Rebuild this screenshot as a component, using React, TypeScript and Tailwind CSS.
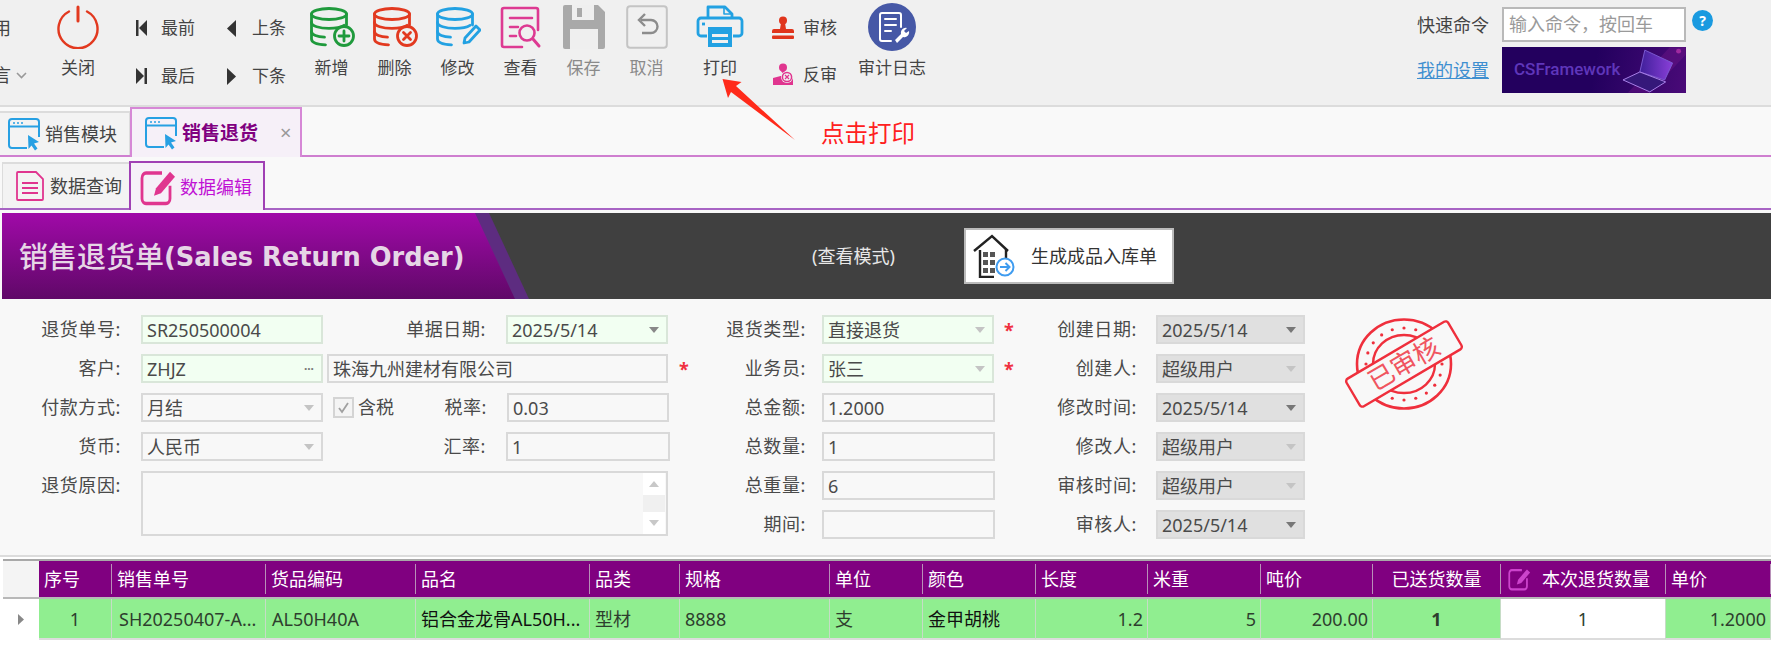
import type { ReactNode } from 'react';

const uiFont = "[font-family:'Noto_Sans','Noto_Sans_CJK_SC',sans-serif]";

function PowerIcon() {
  return (
    <svg width="44" height="44" viewBox="0 0 44 44" fill="none" stroke="#e2391f" strokeLinecap="round">
      <path d="M13 6.5a19.5 19.5 0 1 0 18 0" strokeWidth="2.4" />
      <path d="M22 2v14" strokeWidth="3" />
    </svg>
  );
}

function DbBase({ color, children }: { color: string; children: ReactNode }) {
  return (
    <svg width="46" height="40" viewBox="0 0 46 40" fill="none" stroke={color} strokeWidth="2.8" strokeLinecap="round" strokeLinejoin="round">
      <ellipse cx="20" cy="7" rx="17.5" ry="5.5" />
      <path d="M2.5 7v25c0 3.5 6 5.5 14 5.8" />
      <path d="M37.5 7v11" />
      <path d="M2.5 15.5c0 3.5 8 5.8 17.5 5.8 6 0 12-1 15-3" />
      <path d="M2.5 24.5c0 3.3 6 5.4 13 5.7" />
      {children}
    </svg>
  );
}

function QueryIcon() {
  return (
    <svg width="42" height="44" viewBox="0 0 42 44" fill="none" stroke="#dd3a92" strokeWidth="2.6" strokeLinecap="round">
      <path d="M38 25V5a2 2 0 0 0-2-2H4a2 2 0 0 0-2 2v35a2 2 0 0 0 2 2h18" />
      <path d="M10 13h22M10 22h8M10 31h6" />
      <circle cx="27" cy="28" r="7.5" />
      <path d="M33 34l6 7" strokeWidth="3" />
    </svg>
  );
}

function SaveIcon() {
  return (
    <svg width="44" height="46" viewBox="0 0 44 46">
      <path d="M1 3a2 2 0 0 1 2-2h33l7 7v35a2 2 0 0 1-2 2H3a2 2 0 0 1-2-2z" fill="#a9a9a9" />
      <rect x="10" y="1" width="22" height="15" fill="#efefef" />
      <rect x="15" y="4" width="5" height="9" fill="#a9a9a9" />
      <rect x="8" y="25" width="28" height="20" fill="#efefef" />
    </svg>
  );
}

function CancelIcon() {
  return (
    <svg width="42" height="44" viewBox="0 0 42 44" fill="none">
      <rect x="1.2" y="1.2" width="39.6" height="41.6" rx="3" stroke="#c4c4c4" strokeWidth="2" />
      <path d="M15 15h10a6.5 6.5 0 0 1 0 13h-9" stroke="#8c8c8c" strokeWidth="2.4" />
      <path d="M19 9l-6 6 6 6" stroke="#8c8c8c" strokeWidth="2.4" />
    </svg>
  );
}

function PrintIcon() {
  return (
    <svg width="48" height="44" viewBox="0 0 48 44" fill="none" stroke="#22a1e2" strokeWidth="2.8" strokeLinejoin="round">
      <path d="M12 13V2h17l7 7v4" />
      <path d="M28 2v7h8" strokeWidth="1.6" />
      <path d="M11 31H5a3 3 0 0 1-3-3V16a3 3 0 0 1 3-3h38a3 3 0 0 1 3 3v12a3 3 0 0 1-3 3h-6" />
      <path d="M6 19h3" />
      <rect x="12" y="22" width="24" height="20" fill="#22a1e2" stroke="none" />
      <rect x="16" y="29" width="16" height="3" fill="#f0f0f0" stroke="none" />
      <rect x="16" y="35" width="16" height="3" fill="#f0f0f0" stroke="none" />
    </svg>
  );
}

function LogIcon() {
  return (
    <svg width="48" height="48" viewBox="0 0 48 48" fill="none" stroke="#fff" strokeLinecap="round">
      <circle cx="24" cy="24" r="24" fill="#4658a6" stroke="none" />
      <path d="M33 24V12a2 2 0 0 0-2-2H14a2 2 0 0 0-2 2v24a2 2 0 0 0 2 2h9" strokeWidth="2" />
      <path d="M17 16h11M17 22h11M17 28h6" strokeWidth="2" />
      <path d="M27 37l6-6a5 5 0 0 1 6-6l-3 3 2 2 3-2a5 5 0 0 1-6 6l-6 6z" fill="#fff" stroke="none" />
    </svg>
  );
}

function StampSmall() {
  return (
    <svg width="24" height="24" viewBox="0 0 24 24" fill="#e0351c">
      <circle cx="12" cy="4.5" r="4" />
      <path d="M10 7h4l1 6h6a2 2 0 0 1 2 2v2H1v-2a2 2 0 0 1 2-2h6z" />
      <rect x="1" y="19.5" width="22" height="3.5" rx="1" />
    </svg>
  );
}

function UnStampSmall() {
  return (
    <svg width="24" height="24" viewBox="0 0 24 24" fill="#e0358f">
      <circle cx="12" cy="4.5" r="4" />
      <path d="M10 8h4l.5 5H9.6L2 15v7h20v-7h-7z" />
      <circle cx="16" cy="14" r="6" fill="#f0f0f0" />
      <circle cx="16" cy="14" r="4.6" fill="none" stroke="#e0358f" strokeWidth="1.5" />
      <path d="M14 12l4 4M18 12l-4 4" stroke="#e0358f" strokeWidth="1.2" />
    </svg>
  );
}

function TabIcon({ className }: { className?: string }) {
  return (
    <svg className={className} width="33" height="33" viewBox="0 0 33 33" fill="none">
      <path d="M19 30H4a3 3 0 0 1-3-3V4a3 3 0 0 1 3-3h24a3 3 0 0 1 3 3v15" stroke="#27a0e3" strokeWidth="2" />
      <path d="M1 8.5h30" stroke="#27a0e3" strokeWidth="2" />
      <path d="M5 5h2M9 5h2M13 5h2" stroke="#27a0e3" strokeWidth="1.6" />
      <path d="M20 17l11 7-5 1.5 3.5 5-2.5 2-3.5-5-3 3.5z" fill="#27a0e3" />
    </svg>
  );
}

function DocIcon() {
  return (
    <svg width="28" height="30" viewBox="0 0 28 30" fill="none" stroke="#e0358f" strokeWidth="1.8">
      <path d="M1 2a1 1 0 0 1 1-1h18l7 7v20a1 1 0 0 1-1 1H2a1 1 0 0 1-1-1z" />
      <path d="M6 12h16M6 17h16M6 22h16" />
    </svg>
  );
}

function EditIcon({ size = 38, color = '#e0358f' }: { size?: number; color?: string }) {
  return (
    <svg width={size} height={size} viewBox="0 0 38 30" fill="none" preserveAspectRatio="none">
      <path d="M22 4H6a4 4 0 0 0-4 4v16a4 4 0 0 0 4 4h20a4 4 0 0 0 4-4V14" stroke={color} strokeWidth="2.8" />
      <path d="M14 22l2-6L30 3l5 4-14 13z" fill={color} />
    </svg>
  );
}

function HouseIcon() {
  return (
    <svg width="44" height="44" viewBox="0 0 44 44" fill="none">
      <path d="M2 17L20 2l16 15" stroke="#222" strokeWidth="2.4" />
      <path d="M8 16v27h14M34 15v12" stroke="#222" strokeWidth="2.4" />
      <g fill="#555">
        <rect x="11" y="18" width="5" height="5" />
        <rect x="18" y="18" width="5" height="5" />
        <rect x="11" y="26" width="5" height="5" />
        <rect x="18" y="26" width="5" height="5" />
        <rect x="11" y="34" width="5" height="5" />
        <rect x="18" y="34" width="5" height="5" />
      </g>
      <circle cx="33" cy="33" r="8.5" stroke="#3f9cf0" strokeWidth="2" fill="#fff" />
      <path d="M28 33h9M33.5 29l4 4-4 4" stroke="#3f9cf0" strokeWidth="2" />
    </svg>
  );
}

function Caret({ color = '#8a8a8a', dir = 'down' }: { color?: string; dir?: 'down' | 'up' }) {
  return (
    <svg width="10" height="6" viewBox="0 0 10 6" fill={color}>
      <path d={dir === 'down' ? 'M0 0h10L5 6z' : 'M0 6h10L5 0z'} />
    </svg>
  );
}

function Stamp() {
  const dots = Array.from({ length: 20 }, (_, i) => {
    const a = (i / 20) * Math.PI * 2;
    return [48 + Math.cos(a) * 38, 49 + Math.sin(a) * 36];
  });
  return (
    <svg width="122" height="98" viewBox="-12 0 122 98" fill="none" stroke="#ef2f3c">
      <ellipse cx="48" cy="49" rx="47" ry="44.5" strokeWidth="2.6" />
      <ellipse cx="48" cy="49" rx="31" ry="29" strokeWidth="2.4" />
      {dots.map(([x, y], i) => (
        <circle key={i} cx={x} cy={y} r="1.6" fill="#ef2f3c" stroke="none" />
      ))}
      <g transform="rotate(-30.5 48 49)">
        <rect x="-11" y="33" width="118" height="32" rx="3" fill="#f8f8f8" strokeWidth="2.4" />
        <text x="48" y="58" textAnchor="middle" fontSize="26" fill="#f05560" stroke="none" fontFamily="Noto Sans CJK SC">已审核</text>
      </g>
    </svg>
  );
}

function ToolBtn({ icon, label, muted, className = 'w-[63px]' }: { icon: ReactNode; label: string; muted?: boolean; className?: string }) {
  return (
    <div className={`flex flex-col items-center ${className}`}>
      <div className="flex h-[52px] items-center justify-center">{icon}</div>
      <span className={`mt-[3px] text-[17px] leading-6 ${muted ? 'text-[#8a8a8a]' : 'text-[#444]'}`}>{label}</span>
    </div>
  );
}

function NavItem({ icon, label }: { icon: ReactNode; label: string }) {
  return (
    <div className="flex h-6 items-center">
      <span className="flex w-[25px] items-center">{icon}</span>
      <span className="text-[17px] leading-6 text-[#444]">{label}</span>
    </div>
  );
}

function Toolbar() {
  return (
    <div className="flex h-[107px] shrink-0 items-start border-b-2 border-[#dcdcdc] bg-[#f0f0f0] pt-[1px]">
      <div className="-ml-[7px] flex w-[56px] flex-col gap-[23px] pt-[15px] text-[18px] leading-6 text-[#444]">
        <span>用</span>
        <span className="flex items-center gap-[5px]">
          言
          <svg width="11" height="7" viewBox="0 0 11 7" fill="none" stroke="#999" strokeWidth="1.6"><path d="M1 1l4.5 4.5L10 1" /></svg>
        </span>
      </div>
      <ToolBtn icon={<PowerIcon />} label="关闭" className="w-[58px]" />
      <div className="ml-[29px] flex w-[91px] flex-col gap-[24px] pt-[15px]">
        <NavItem label="最前" icon={<svg width="11" height="16" viewBox="0 0 11 16" fill="#333"><rect width="2.5" height="16" /><path d="M11 0v16L3 8z" /></svg>} />
        <NavItem label="最后" icon={<svg width="11" height="16" viewBox="0 0 11 16" fill="#333"><rect x="8.5" width="2.5" height="16" /><path d="M0 0v16l8-8z" /></svg>} />
      </div>
      <div className="flex w-[73px] flex-col gap-[24px] pt-[15px]">
        <NavItem label="上条" icon={<svg width="9" height="17" viewBox="0 0 9 17" fill="#333"><path d="M9 0v17L0 8.5z" /></svg>} />
        <NavItem label="下条" icon={<svg width="9" height="17" viewBox="0 0 9 17" fill="#333"><path d="M0 0v17l9-8.5z" /></svg>} />
      </div>
      <ToolBtn label="新增" icon={<DbBase color="#1f9a3c"><circle cx="35" cy="29" r="9.5" /><path d="M35 24v10M30 29h10" /></DbBase>} />
      <ToolBtn label="删除" icon={<DbBase color="#e2391f"><circle cx="35" cy="29" r="9.5" /><path d="M31.5 25.5l7 7M38.5 25.5l-7 7" /></DbBase>} />
      <ToolBtn label="修改" icon={<DbBase color="#22a1e2"><path d="M30 31l11-12 4 4-11 12-5 1z" /></DbBase>} />
      <ToolBtn label="查看" icon={<QueryIcon />} />
      <ToolBtn label="保存" muted icon={<SaveIcon />} />
      <ToolBtn label="取消" muted icon={<CancelIcon />} />
      <ToolBtn label="打印" icon={<PrintIcon />} className="w-[84px]" />
      <div className="ml-[9px] flex w-[81px] flex-col gap-[23px] pt-[15px]">
        <div className="flex h-6 items-center gap-[8px] text-[17px] text-[#444]"><StampSmall />审核</div>
        <div className="flex h-6 items-center gap-[8px] text-[17px] text-[#444]"><UnStampSmall />反审</div>
      </div>
      <ToolBtn label="审计日志" icon={<LogIcon />} className="w-[80px]" />
      <div className="ml-auto mr-[58px] flex flex-col gap-[5px] pt-[6px]">
        <div className="flex items-center">
          <span className="w-[85px] text-[18px] leading-6 text-[#444]">快速命令</span>
          <div className="flex h-[35px] w-[184px] items-center border-2 border-[#b9b9b9] bg-white pl-[5px] text-[18px] text-[#9a9a9a]">输入命令，按回车</div>
          <span className="mb-2 ml-[6px] flex h-[21px] w-[21px] items-center justify-center rounded-full bg-[#1a9ae0] text-[14px] font-bold text-white">?</span>
        </div>
        <div className="flex items-center">
          <span className="w-[85px] text-[18px] leading-6 text-[#3e8fd0] underline">我的设置</span>
          <div className="flex h-[46px] w-[184px] items-center justify-between overflow-hidden bg-[linear-gradient(100deg,#23005e_50%,#33056a_72%,#4a0a78_100%)] pl-[12px]">
            <span className="text-[17px] font-medium [font-family:Roboto,sans-serif] text-[#5f36ba]">CSFramework</span>
            <svg width="66" height="46" viewBox="0 0 66 46" fill="none">
              <defs>
                <linearGradient id="screen" x1="0" y1="0" x2="1" y2="0">
                  <stop offset="0" stopColor="#3f1f9a" />
                  <stop offset="1" stopColor="#8a3fd8" />
                </linearGradient>
              </defs>
              <path d="M8 46L50 0h16v8L30 46z" fill="#7a1a8c" opacity="0.35" />
              <path d="M25 3l28 13-8 17-25-8z" fill="url(#screen)" stroke="#7a58d0" />
              <path d="M3 33l17-8 26 10-16 10z" fill="#35187a" stroke="#a880e8" />
              <circle cx="59" cy="4" r="2.5" fill="#a02aa0" />
            </svg>
          </div>
        </div>
      </div>
    </div>
  );
}

function Tabs() {
  return (
    <div className="flex h-[50px] shrink-0 items-end border-b-2 border-[#cf7fd0] bg-[#f9f9f9]">
      <div className="flex h-[44px] w-[130px] items-center gap-[4px] border-r border-t-2 border-[#dcdcdc] bg-[#f3f3f3] pl-2 text-[18px] text-[#444]">
        <TabIcon />
        <span>销售模块</span>
      </div>
      <div className="-mb-[2px] flex h-[50px] w-[172px] items-center border-2 border-b-0 border-[#d688d6] bg-[#f6f0f8] pl-[13px] text-[#444]">
        <TabIcon />
        <span className="ml-[4px] text-[19px] font-bold leading-6 text-[#800080]">销售退货</span>
        <span className="ml-[22px] text-[20px] leading-6 text-[#999]">×</span>
      </div>
    </div>
  );
}

function SubTabs() {
  return (
    <div className="flex h-[53px] shrink-0 items-end border-b-2 border-[#a864c4] bg-[#f9f9f9] pl-[2px]">
      <div className="flex h-[46px] w-[127px] items-center gap-[6px] border-l border-t-2 border-[#dcdcdc] bg-[#f3f3f3] pl-[13px] text-[18px] text-[#444]">
        <DocIcon />
        <span>数据查询</span>
      </div>
      <div className="-mb-[2px] flex h-[49px] w-[136px] items-center gap-[2px] border-2 border-b-0 border-[#a040b4] bg-[#f6f0f8] pl-[9px]">
        <EditIcon />
        <span className="text-[18px] leading-6 text-[#c012d4]">数据编辑</span>
      </div>
    </div>
  );
}

function Banner() {
  return (
    <div className="ml-[2px] mt-[3px] flex h-[86px] shrink-0 items-stretch bg-[#404040]">
      <div className="h-full w-[527px] bg-[#5d2c80] [clip-path:polygon(0_0,487px_0,527px_100%,0_100%)]">
        <div className="flex h-full w-[513px] items-center bg-[linear-gradient(180deg,#a00aa8,#600868)] pl-[17px] pt-[2px] text-[#e6d6e6] [clip-path:polygon(0_0,473px_0,513px_100%,0_100%)]">
          <span className="text-[29px] font-medium leading-9">销售退货单</span>
          <span className="text-[25.7px] font-bold leading-9 [font-family:'DejaVu_Sans',sans-serif]">(Sales Return Order)</span>
        </div>
      </div>
      <span className="ml-[283px] w-[90px] self-center text-[18px] text-[#e8e8e8]">(查看模式)</span>
      <div className="ml-[62px] mt-[15px] flex h-[56px] w-[210px] items-center border-2 border-[#bbb] bg-white pl-[6px] text-[18px] text-[#333]">
        <HouseIcon />
        <span className="ml-[15px]">生成成品入库单</span>
      </div>
    </div>
  );
}

type Tone = 'plain' | 'green' | 'gray';

const toneClass: Record<Tone, string> = {
  plain: 'bg-[#f8f8f8] border-[#d9d9d9]',
  green: 'bg-[#f2fff2] border-[#d9e6d9]',
  gray: 'bg-[#e0e0e0] border-[#d9d9d9]',
};

function Field({ value, tone = 'plain', width, caret, dots }: { value?: string; tone?: Tone; width: string; caret?: string; dots?: boolean }) {
  return (
    <div className={`flex h-[29px] items-center justify-between border-2 pl-[4px] pr-[7px] text-[18px] leading-none text-[#4a4a4a] ${toneClass[tone]} ${width}`}>
      <span>{value}</span>
      {caret && <Caret color={caret} />}
      {dots && <span className="text-[12px] font-bold text-[#777]">···</span>}
    </div>
  );
}

function Label({ children, width }: { children: string; width: string }) {
  return <span className={`shrink-0 text-right text-[18px] leading-[29px] tracking-[0.6px] text-[#4a4a4a] ${width}`}>{children}</span>;
}

function Star({ className = '' }: { className?: string }) {
  return <span className={`text-[18px] font-bold leading-[18px] text-[#f03040] ${className}`}>*</span>;
}

function FormPanel() {
  const row = 'flex h-[29px] items-center';
  return (
    <div className="flex h-[258px] shrink-0 border-b-2 border-[#dcdcdc] bg-[#f8f8f8] pt-[16px]">
      <div className="flex w-[683px] shrink-0 flex-col gap-[10px]">
        <div className={row}>
          <Label width="w-[121px]">退货单号:</Label>
          <div className="ml-[20px]"><Field value="SR250500004" tone="green" width="w-[182px]" /></div>
          <Label width="w-[163px]">单据日期:</Label>
          <div className="ml-[20px]"><Field value="2025/5/14" tone="green" width="w-[162px]" caret="#888" /></div>
        </div>
        <div className={row}>
          <Label width="w-[121px]">客户:</Label>
          <div className="ml-[20px]"><Field value="ZHJZ" tone="green" width="w-[182px]" dots /></div>
          <div className="ml-[4px]"><Field value="珠海九州建材有限公司" width="w-[341px]" /></div>
          <Star className="ml-[11px]" />
        </div>
        <div className={row}>
          <Label width="w-[121px]">付款方式:</Label>
          <div className="ml-[20px]"><Field value="月结" width="w-[182px]" caret="#c4c4c4" /></div>
          <span className="ml-[10px] flex h-[21px] w-[21px] items-center justify-center border-2 border-[#d4d4d4] bg-[#f4f4f4]">
            <svg width="13" height="13" viewBox="0 0 13 13" fill="none" stroke="#a0a0a0" strokeWidth="1.8"><path d="M2 7l3 4 6-9" /></svg>
          </span>
          <span className="ml-[4px] text-[18px] leading-[29px] text-[#4a4a4a]">含税</span>
          <Label width="w-[93px]">税率:</Label>
          <div className="ml-[20px]"><Field value="0.03" width="w-[162px]" /></div>
        </div>
        <div className={row}>
          <Label width="w-[121px]">货币:</Label>
          <div className="ml-[20px]"><Field value="人民币" width="w-[182px]" caret="#c4c4c4" /></div>
          <Label width="w-[163px]">汇率:</Label>
          <div className="ml-[20px]"><Field value="1" width="w-[164px]" /></div>
        </div>
        <div className="flex items-start">
          <Label width="w-[121px]">退货原因:</Label>
          <div className="ml-[20px] flex h-[65px] w-[527px] justify-end border-2 border-[#d9d9d9] bg-[#f8f8f8] pr-[1px]">
            <div className="flex w-[22px] flex-col justify-between bg-[#f0f0f0]">
              <span className="flex h-[22px] items-center justify-center bg-white"><Caret color="#c8c8c8" dir="up" /></span>
              <span className="flex h-[22px] items-center justify-center bg-white"><Caret color="#c8c8c8" /></span>
            </div>
          </div>
        </div>
      </div>
      <div className="flex w-[334px] shrink-0 flex-col gap-[10px]">
        <div className={row}>
          <Label width="w-[123px]">退货类型:</Label>
          <div className="ml-[16px]"><Field value="直接退货" tone="green" width="w-[172px]" caret="#c4c4c4" /></div>
          <Star className="ml-[10px]" />
        </div>
        <div className={row}>
          <Label width="w-[123px]">业务员:</Label>
          <div className="ml-[16px]"><Field value="张三" tone="green" width="w-[172px]" caret="#c4c4c4" /></div>
          <Star className="ml-[10px]" />
        </div>
        {[['总金额:', '1.2000'], ['总数量:', '1'], ['总重量:', '6'], ['期间:', '']].map(([label, value]) => (
          <div className={row} key={label}>
            <Label width="w-[123px]">{label}</Label>
            <div className="ml-[16px]"><Field value={value} width="w-[173px]" /></div>
          </div>
        ))}
      </div>
      <div className="flex w-[288px] shrink-0 flex-col gap-[10px]">
        {[
          ['创建日期:', '2025/5/14', '#777'],
          ['创建人:', '超级用户', '#c4c4c4'],
          ['修改时间:', '2025/5/14', '#777'],
          ['修改人:', '超级用户', '#c4c4c4'],
          ['审核时间:', '超级用户', '#c4c4c4'],
          ['审核人:', '2025/5/14', '#777'],
        ].map(([label, value, caret]) => (
          <div className={row} key={label}>
            <Label width="w-[120px]">{label}</Label>
            <div className="ml-[19px]"><Field value={value} tone="gray" width="w-[149px]" caret={caret} /></div>
          </div>
        ))}
      </div>
      <div className="ml-[39px]">
        <Stamp />
      </div>
    </div>
  );
}

type Col = { title: ReactNode; value: ReactNode; width: string; head: string; cell: string };

const cols: Col[] = [
  { title: '序号', value: '1', width: 'w-[73px]', head: 'pl-[5px]', cell: 'justify-center' },
  { title: '销售单号', value: 'SH20250407-A...', width: 'w-[154px]', head: 'pl-[5px]', cell: 'pl-[7px]' },
  { title: '货品编码', value: 'AL50H40A', width: 'w-[150px]', head: 'pl-[5px]', cell: 'pl-[6px]' },
  { title: '品名', value: <span className="text-[#111]">铝合金龙骨AL50H...</span>, width: 'w-[174px]', head: 'pl-[5px]', cell: 'pl-[5px]' },
  { title: '品类', value: '型材', width: 'w-[90px]', head: 'pl-[5px]', cell: 'pl-[5px]' },
  { title: '规格', value: '8888', width: 'w-[150px]', head: 'pl-[5px]', cell: 'pl-[5px]' },
  { title: '单位', value: '支', width: 'w-[93px]', head: 'pl-[5px]', cell: 'pl-[5px]' },
  { title: '颜色', value: <span className="text-[#111]">金甲胡桃</span>, width: 'w-[113px]', head: 'pl-[5px]', cell: 'pl-[5px]' },
  { title: '长度', value: '1.2', width: 'w-[112px]', head: 'pl-[5px]', cell: 'justify-end pr-[4px]' },
  { title: '米重', value: '5', width: 'w-[113px]', head: 'pl-[5px]', cell: 'justify-end pr-[4px]' },
  { title: '吨价', value: '200.00', width: 'w-[112px]', head: 'pl-[5px]', cell: 'justify-end pr-[4px]' },
  { title: '已送货数量', value: <b>1</b>, width: 'w-[128px]', head: 'justify-center', cell: 'justify-center' },
  {
    title: (
      <>
        <EditIcon size={24} color="#cc44cc" />
        <span className="ml-[10px]">本次退货数量</span>
      </>
    ),
    value: '1',
    width: 'w-[165px]',
    head: 'pl-[7px]',
    cell: 'justify-center bg-white',
  },
  { title: '单价', value: '1.2000', width: 'w-[105px]', head: 'pl-[5px]', cell: 'justify-end pr-[4px]' },
];

function Grid() {
  return (
    <div className="flex-1 bg-white pl-[3px] pt-[2px]">
      <div className="flex h-[38px] border-t-2 border-[#a8a8a8]">
        <div className="w-[36px] shrink-0 bg-[#f4f4f4]" />
        {cols.map((c, i) => (
          <div key={i} className={`flex shrink-0 items-center bg-[#800080] ${c.width}`}>
            <div className={`flex h-[30px] w-full items-center border-r border-[#b890b8] text-[18px] leading-6 text-white ${c.head}`}>{c.title}</div>
          </div>
        ))}
      </div>
      <div className="flex h-[43px] border-t-2 border-[#b8b8b8]">
        <div className="flex w-[36px] shrink-0 items-center justify-center">
          <svg width="6" height="11" viewBox="0 0 6 11" fill="#888"><path d="M0 0v11l6-5.5z" /></svg>
        </div>
        {cols.map((c, i) => (
          <div key={i} className={`flex shrink-0 items-center border-b-2 border-r border-b-[#dcdcdc] border-r-[#c6dcc6] bg-[#90ee90] text-[18px] leading-6 text-[#2e3e2e] ${c.width} ${c.cell}`}>
            {c.value}
          </div>
        ))}
      </div>
    </div>
  );
}

export default function App() {
  return (
    <div className={`flex h-[658px] w-[1771px] flex-col overflow-hidden bg-[#f8f8f8] ${uiFont}`}>
      <Toolbar />
      <div className="relative">
        <Tabs />
        {/* annotation drawn over the screenshot */}
        <svg className="absolute left-[715px] -top-[35px]" width="90" height="70" viewBox="0 0 90 70">
          <path d="M7.5 7L26.5 10L21 14L80 68L16 20L13 26z" fill="#ff2a1a" />
        </svg>
        <span className="absolute left-[821px] top-[12px] text-[23.5px] leading-7 text-[#ff2020]">点击打印</span>
      </div>
      <SubTabs />
      <Banner />
      <FormPanel />
      <Grid />
    </div>
  );
}
